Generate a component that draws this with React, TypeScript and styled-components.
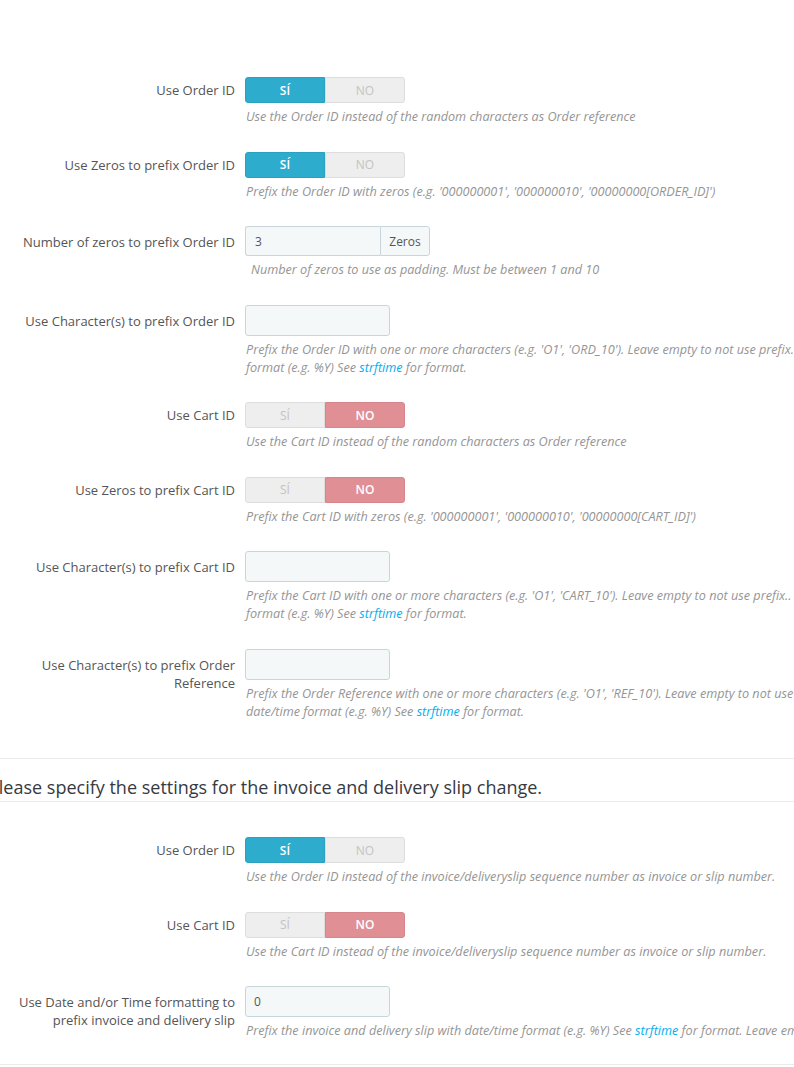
import React from 'react';
import styled, { createGlobalStyle } from 'styled-components';

const Global = createGlobalStyle`
  html, body { margin: 0; padding: 0; overflow: hidden; background: #fff; }
  body { font-family: "Open Sans", "Liberation Sans", sans-serif; color: #555; }
`;

const Page = styled.div`
  display: flex;
  flex-direction: column;
  padding-top: 77px;
`;

const Group = styled.div`
  display: flex;
  align-items: flex-start;
  margin-bottom: 26.5px;
`;

const Label = styled.label<{ $pt: number }>`
  box-sizing: border-box;
  flex: none;
  width: 235px;
  padding-left: 9px;
  padding-top: ${(p) => p.$pt}px;
  text-align: right;
  font-size: 13px;
  line-height: 18px;
  color: #555;
`;

const Control = styled.div`
  flex: 1;
  min-width: 0;
  margin-left: 10px;
`;

const Switch = styled.div`
  display: flex;
  width: 160px;
  height: 26px;
`;

const SwitchOption = styled.span<{ $on: boolean; $tone: 'yes' | 'no'; $side: 'left' | 'right' }>`
  box-sizing: border-box;
  flex: 1;
  display: flex;
  align-items: center;
  justify-content: center;
  font-size: 12px;
  text-transform: uppercase;
  border-radius: ${(p) => (p.$side === 'left' ? '3px 0 0 3px' : '0 3px 3px 0')};
  background: ${(p) => (p.$on ? (p.$tone === 'yes' ? '#2eacce' : '#e08f95') : '#eeeeee')};
  border: 1px solid ${(p) => (p.$on ? (p.$tone === 'yes' ? '#2aa1c1' : '#d7848a') : '#dddddd')};
  color: ${(p) => (p.$on ? '#fff' : '#c3c3c3')};
  font-weight: ${(p) => (p.$on ? 600 : 400)};
`;

const Help = styled.p<{ $indent?: number }>`
  margin: 4px 0 0;
  padding-left: ${(p) => p.$indent ?? 1}px;
  font-size: 12.65px;
  line-height: 18px;
  font-style: italic;
  color: #959595;
  white-space: nowrap;
`;

const Link = styled.a`
  color: #00aff0;
  text-decoration: none;
`;

const TextInput = styled.div<{ $width: number }>`
  box-sizing: border-box;
  width: ${(p) => p.$width}px;
  height: 31px;
  padding: 0 8px;
  display: flex;
  align-items: center;
  background: #f5f8f9;
  border: 1px solid #c7d6db;
  border-radius: 3px;
  font-size: 12px;
  color: #555;
`;

const InputGroup = styled.div`
  display: flex;
  width: 185px;
  height: 30px;
`;

const GroupField = styled.div`
  box-sizing: border-box;
  flex: 1;
  display: flex;
  align-items: center;
  padding: 0 9px;
  background: #f5f8f9;
  border: 1px solid #c7d6db;
  border-right: none;
  border-radius: 3px 0 0 3px;
  font-size: 12px;
  color: #555;
`;

const Addon = styled.div`
  box-sizing: border-box;
  width: 50px;
  display: flex;
  align-items: center;
  justify-content: center;
  background: #f5f8f9;
  border: 1px solid #c7d6db;
  border-radius: 0 3px 3px 0;
  font-size: 12px;
  color: #555;
`;

const Divider = styled.div<{ $mt: number }>`
  margin-top: ${(p) => p.$mt}px;
  border-top: 1px solid #eaeaea;
`;

const Heading = styled.h3`
  margin: 0 0 35px -12px;
  padding: 16px 0 2px;
  font-size: 18px;
  line-height: 24px;
  font-weight: 400;
  color: #363a41;
  white-space: nowrap;
  border-bottom: 1px solid #eaeaea;
`;

function Toggle({ value }: { value: boolean }) {
  return (
    <Switch>
      <SwitchOption $on={value} $tone="yes" $side="left">SÍ</SwitchOption>
      <SwitchOption $on={!value} $tone="no" $side="right">NO</SwitchOption>
    </Switch>
  );
}

const Strf = () => <Link href="#">strftime</Link>;

export default function App() {
  return (
    <Page>
      <Global />
      <Group>
        <Label $pt={4}>Use Order ID</Label>
        <Control>
          <Toggle value={true} />
          <Help>Use the Order ID instead of the random characters as Order reference</Help>
        </Control>
      </Group>
      <Group>
        <Label $pt={4}>Use Zeros to prefix Order ID</Label>
        <Control>
          <Toggle value={true} />
          <Help>Prefix the Order ID with zeros (e.g. '000000001', '000000010', '00000000[ORDER_ID]')</Help>
        </Control>
      </Group>
      <Group>
        <Label $pt={7}>Number of zeros to prefix Order ID</Label>
        <Control>
          <InputGroup>
            <GroupField>3</GroupField>
            <Addon>Zeros</Addon>
          </InputGroup>
          <Help $indent={6}>Number of zeros to use as padding. Must be between 1 and 10</Help>
        </Control>
      </Group>
      <Group>
        <Label $pt={7}>Use Character(s) to prefix Order ID</Label>
        <Control>
          <TextInput $width={145} />
          <Help>
            Prefix the Order ID with one or more characters (e.g. 'O1', 'ORD_10'). Leave empty to not use prefix. You can also use date/time
            <br />
            format (e.g. %Y) See <Strf /> for format.
          </Help>
        </Control>
      </Group>
      <Group>
        <Label $pt={4}>Use Cart ID</Label>
        <Control>
          <Toggle value={false} />
          <Help>Use the Cart ID instead of the random characters as Order reference</Help>
        </Control>
      </Group>
      <Group>
        <Label $pt={4}>Use Zeros to prefix Cart ID</Label>
        <Control>
          <Toggle value={false} />
          <Help>Prefix the Cart ID with zeros (e.g. '000000001', '000000010', '00000000[CART_ID]')</Help>
        </Control>
      </Group>
      <Group>
        <Label $pt={7}>Use Character(s) to prefix Cart ID</Label>
        <Control>
          <TextInput $width={145} />
          <Help>
            Prefix the Cart ID with one or more characters (e.g. 'O1', 'CART_10'). Leave empty to not use prefix.. You can also use date/time
            <br />
            format (e.g. %Y) See <Strf /> for format.
          </Help>
        </Control>
      </Group>
      <Group>
        <Label $pt={7}>Use Character(s) to prefix Order Reference</Label>
        <Control>
          <TextInput $width={145} />
          <Help>
            Prefix the Order Reference with one or more characters (e.g. 'O1', 'REF_10'). Leave empty to not use prefix. You can also use
            <br />
            date/time format (e.g. %Y) See <Strf /> for format.
          </Help>
        </Control>
      </Group>

      <Divider $mt={12} />
      <Heading>Please specify the settings for the invoice and delivery slip change.</Heading>

      <Group>
        <Label $pt={4}>Use Order ID</Label>
        <Control>
          <Toggle value={true} />
          <Help>Use the Order ID instead of the invoice/deliveryslip sequence number as invoice or slip number.</Help>
        </Control>
      </Group>
      <Group>
        <Label $pt={4}>Use Cart ID</Label>
        <Control>
          <Toggle value={false} />
          <Help>Use the Cart ID instead of the invoice/deliveryslip sequence number as invoice or slip number.</Help>
        </Control>
      </Group>
      <Group>
        <Label $pt={7}>Use Date and/or Time formatting to prefix invoice and delivery slip</Label>
        <Control>
          <TextInput $width={145}>0</TextInput>
          <Help>
            Prefix the invoice and delivery slip with date/time format (e.g. %Y) See <Strf /> for format. Leave empty to not use a prefix.
          </Help>
        </Control>
      </Group>
      <Divider $mt={-2} />
    </Page>
  );
}
